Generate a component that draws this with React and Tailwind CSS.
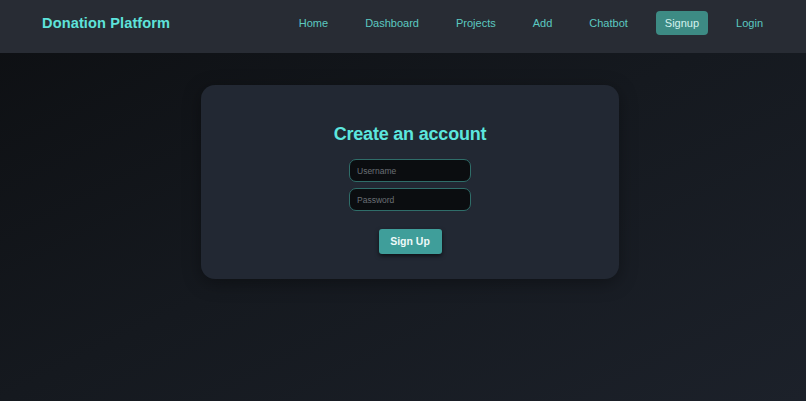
import React from 'react';

const navLinks = ['Home', 'Dashboard', 'Projects', 'Add', 'Chatbot', 'Signup', 'Login'];

const Navbar = () => (
  <header className="h-[53px] bg-[#282c34] flex items-center justify-between pl-[42px] pr-[34px] pb-[7px]">
    <h1 className="mt-[2px] text-[14.6px] font-bold text-[#5ee3db] tracking-[0.1px]">Donation Platform</h1>
    <nav className="flex items-center gap-[19px]">
      {navLinks.map((link) => (
        <a
          key={link}
          href="#"
          className={`h-[24px] px-[9px] flex items-center rounded-[4px] text-[11px] ${
            link === 'Signup' ? 'bg-[#3d8b84] text-[#d4f2ef]' : 'text-[#5cc9c1]'
          }`}
        >
          {link}
        </a>
      ))}
    </nav>
  </header>
);

const App = () => {
  return (
    <div
      className="h-[401px] bg-linear-to-br from-[#0d0f12] via-[#15191f] to-[#1c212a]"
      style={{ fontFamily: '"Liberation Sans", Arial, sans-serif' }}
    >
      <Navbar />

      {/* Signup card */}
      <div className="flex justify-center pt-[32px] pl-[14px]">
        <div className="w-[418px] h-[194px] bg-[#222833] rounded-[14px] shadow-[0_4px_18px_rgba(0,0,0,0.35)] flex flex-col items-center pt-[38px]">
          <h2 className="text-[18px] leading-[22px] font-bold text-[#5ce6de] tracking-[-0.2px]">
            Create an account
          </h2>
          <form className="mt-[14px] flex flex-col items-center" onSubmit={(e) => e.preventDefault()}>
            <input
              type="text"
              placeholder="Username"
              className="w-[122px] h-[23px] px-[7px] rounded-[7px] bg-[#0b0d10] border border-[#2f6d69] text-[8.5px] text-gray-200 placeholder:text-[#6a6f75] outline-none"
            />
            <input
              type="password"
              placeholder="Password"
              className="mt-[6px] w-[122px] h-[23px] px-[7px] rounded-[7px] bg-[#0b0d10] border border-[#2f6d69] text-[8.5px] text-gray-200 placeholder:text-[#6a6f75] outline-none"
            />
            <button
              type="submit"
              className="mt-[18px] w-[63px] h-[25px] rounded-[3px] bg-[#3f9e9a] text-[#eef9f8] text-[10.5px] font-bold shadow-[0_2px_4px_rgba(0,0,0,0.6)]"
            >
              Sign Up
            </button>
          </form>
        </div>
      </div>
    </div>
  );
};

export default App;
